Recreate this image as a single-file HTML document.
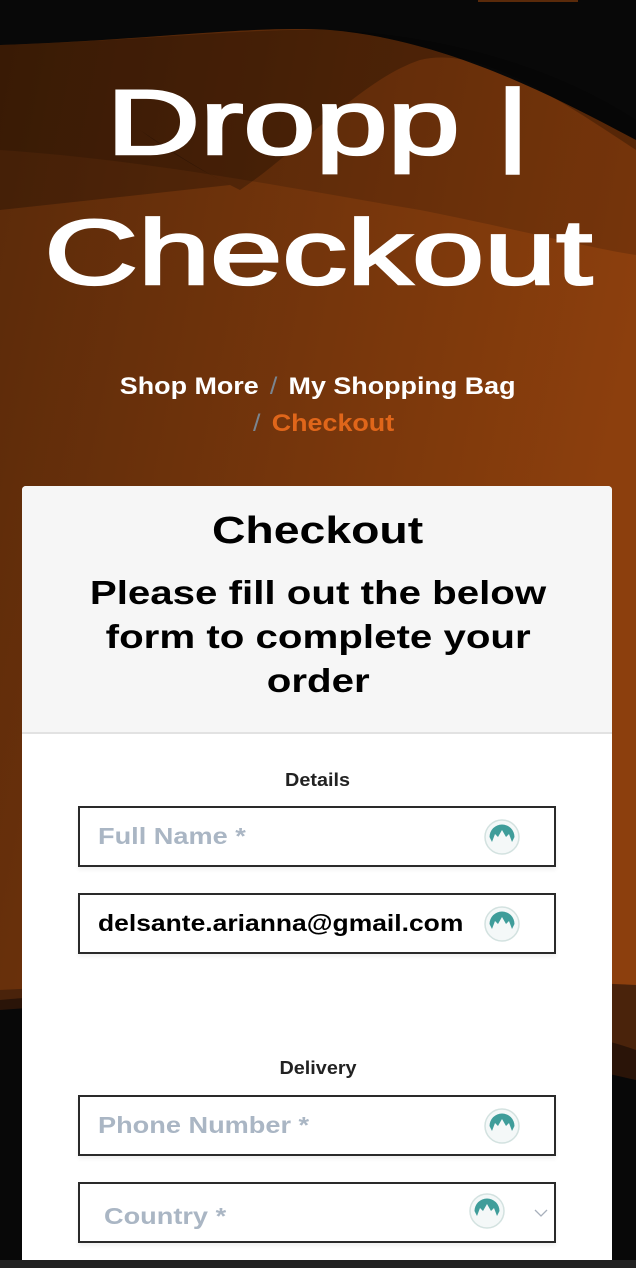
<!DOCTYPE html>
<html><head><meta charset="utf-8"><style>
*{margin:0;padding:0;box-sizing:border-box}
body{width:636px;height:1268px;overflow:hidden;position:relative;background:#0a0a0a;font-family:"Liberation Sans",sans-serif}
.bg{position:absolute;left:0;top:0}
.c{position:absolute;left:0;width:636px;text-align:center;white-space:nowrap}
.s{display:inline-block}
.t{color:#fff;font-size:92px;line-height:92px;-webkit-text-stroke:2.5px #fff}
.bc{font-size:24px;font-weight:bold;color:#fff}
.sl{color:#7a8590;font-weight:normal;margin:0 10px}
.card{position:absolute;left:22px;top:486px;width:590px;height:774px;background:#fff;border-radius:4px 4px 0 0;overflow:hidden}
.hd{position:absolute;left:0;top:0;width:590px;height:248px;background:#f6f6f6;border-bottom:2px solid #e2e2e2}
.in{position:absolute;left:78px;width:478px;height:61px;border:2px solid #2a2a2a;background:#fff;box-shadow:0 3px 4px rgba(0,0,0,.06)}
.ph{position:absolute;left:18px;top:15px;font-size:23px;font-weight:bold;color:#aab6c4;white-space:nowrap}
.ic{position:absolute;top:11px;width:36px;height:36px}
.lb{font-size:18px;font-weight:bold;color:#222}
.bar{position:absolute;left:0;top:1260px;width:636px;height:8px;background:#222}
</style></head><body>
<svg class="bg" width="636" height="1268" viewBox="0 0 636 1268">
<defs><linearGradient id="g" x1="0" y1="0" x2="1" y2="0.3"><stop offset="0" stop-color="#5a2a0a"/><stop offset="1" stop-color="#8c3f0d"/></linearGradient></defs>
<rect width="636" height="1268" fill="#080808"/>
<path d="M0 45 C150 40 250 25 330 30 C450 40 560 100 636 140 L636 1000 L0 1000Z" fill="url(#g)"/>
<path d="M0 45 C60 70 100 100 140 130 C180 160 220 180 240 190 C300 150 360 80 420 60 C480 45 560 100 636 150 L636 120 C560 70 450 35 330 30 C250 28 150 40 0 45Z" fill="#000" opacity=".25"/>
<path d="M0 45 C60 70 100 100 140 130 C170 150 200 170 230 185 L0 210Z" fill="#000" opacity=".25"/>
<path d="M0 150 C150 160 300 190 420 210 C520 230 600 250 636 255 L636 140 C560 100 450 40 330 30 C250 25 150 40 0 45Z" fill="#000" opacity=".15"/>
<path d="M0 990 C200 980 400 975 636 985 L636 1268 L0 1268Z" fill="#4a230b"/>
<path d="M0 1000 C100 990 250 1000 400 1010 C500 1020 580 1030 636 1050 L636 1268 L0 1268Z" fill="#2a1408"/>
<path d="M0 1010 C120 1000 250 1010 380 1030 C480 1045 570 1065 636 1080 L636 1268 L0 1268Z" fill="#080808"/>
<rect x="478" y="0" width="100" height="2" fill="#5a2a0a"/>
</svg>
<div class="c t" style="top:77px"><span class="s" style="transform:scaleX(1.41)">Dropp |</span></div>
<div class="c t" style="top:207px"><span class="s" style="transform:scaleX(1.41)">Checkout</span></div>
<div class="c bc" style="top:373px"><span class="s" style="transform:scaleX(1.12)">Shop More<span class="sl">/</span>My Shopping Bag</span></div>
<div class="c bc" style="top:410px"><span class="s" style="transform:scaleX(1.12)"><span class="sl">/</span><span style="color:#e0661a">Checkout</span></span></div>
<div class="card"><div class="hd"></div></div>
<div class="c" style="top:510px;font-size:38px;font-weight:bold;color:#000"><span class="s" style="transform:scaleX(1.22)">Checkout</span></div>
<div class="c" style="top:571px;font-size:33px;line-height:44px;font-weight:bold;color:#000">
<div><span class="s" style="transform:scaleX(1.22)">Please fill out the below</span></div>
<div><span class="s" style="transform:scaleX(1.22)">form to complete your</span></div>
<div><span class="s" style="transform:scaleX(1.22)">order</span></div>
</div>
<div class="c lb" style="top:770px"><span class="s" style="transform:scaleX(1.1)">Details</span></div>
<div class="c lb" style="top:1058px"><span class="s" style="transform:scaleX(1.1)">Delivery</span></div>

<svg width="0" height="0" style="position:absolute"><defs><g id="ico">
<circle cx="18" cy="18" r="17" fill="#f4f8f8" stroke="#d3e2e0" stroke-width="1.5"/>
<path d="M5.5 18 A12.5 12.5 0 0 1 30.5 18 L28 23 L25 15 L22 18 L18 11 L14 18 L11 15 L8 23Z" fill="#3f9d9a"/>
</g></defs></svg>

<div class="in" style="top:806px"><div class="ph"><span class="s" style="transform:scaleX(1.18);transform-origin:left">Full Name *</span></div><svg class="ic" style="left:404px" viewBox="0 0 36 36"><use href="#ico"/></svg></div>
<div class="in" style="top:893px"><div class="ph" style="color:#000"><span class="s" style="transform:scaleX(1.15);transform-origin:left">delsante.arianna@gmail.com</span></div><svg class="ic" style="left:404px" viewBox="0 0 36 36"><use href="#ico"/></svg></div>
<div class="in" style="top:1095px"><div class="ph"><span class="s" style="transform:scaleX(1.18);transform-origin:left">Phone Number *</span></div><svg class="ic" style="left:404px" viewBox="0 0 36 36"><use href="#ico"/></svg></div>
<div class="in" style="top:1182px"><div class="ph" style="left:24px;top:19px"><span class="s" style="transform:scaleX(1.18);transform-origin:left">Country *</span></div><svg class="ic" style="left:389px;top:9px" viewBox="0 0 36 36"><use href="#ico"/></svg>
<svg style="position:absolute;left:454px;top:24px" width="14" height="10" viewBox="0 0 14 10"><path d="M1 2 L7 8 L13 2" fill="none" stroke="#a8b0bc" stroke-width="1.3"/></svg></div>
<div class="bar"></div>
</body></html>
